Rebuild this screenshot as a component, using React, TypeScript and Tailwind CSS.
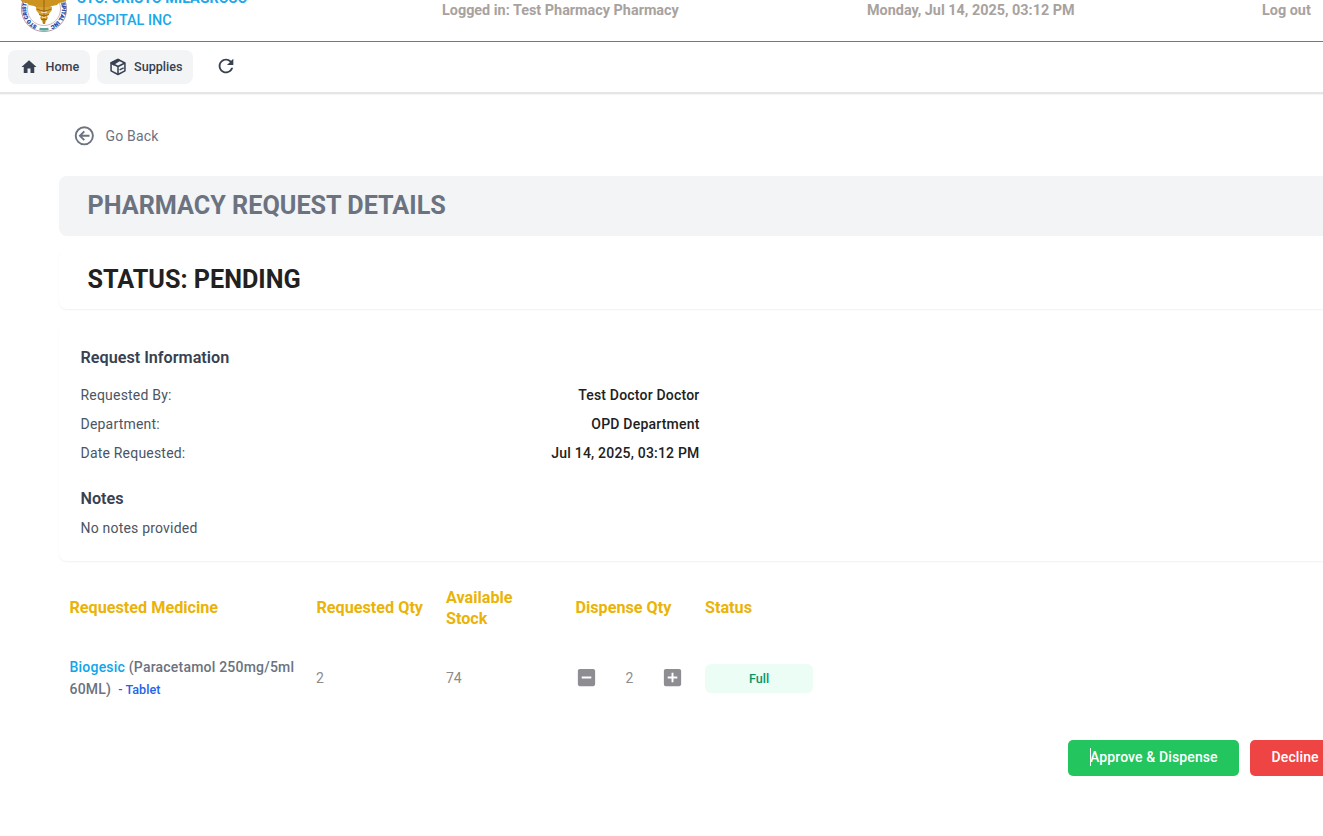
import React from "react";
import { MdHome, MdRefresh, MdIndeterminateCheckBox, MdAddBox } from "react-icons/md";

function Logo() {
  return (
    <svg viewBox="0 0 48 48" className="h-12 w-12 shrink-0">
      <defs>
        <path id="ringText" d="M24 42A18 18 0 0 1 24 6A18 18 0 0 1 24 42" />
      </defs>
      <circle cx="24" cy="24" r="22.600" fill="#fff" stroke="#a8828c" strokeWidth="0.8" />
      <circle cx="24" cy="24" r="16.500" fill="#fff" stroke="#c09aa0" strokeWidth="0.7" />
      <text fontSize="5.400" fontWeight="900" fill="#2346a8" stroke="#2346a8" strokeWidth="0.2" fontFamily="Roboto, sans-serif">
        <textPath href="#ringText" startOffset="7" textLength="99">STO CRISTO MILAGROSO HOSPITAL INC</textPath>
      </text>
      <path d="M19.500 44q4.500 0.800 9 0" stroke="#5aa39b" strokeWidth="2.600" fill="none" />
      <path d="M0 14q12-3 23 1h2q11-4 23-1l-4 3-5 1-2 2-5 1-2 1-6 1h-2l-6-1-2-1-5-1-2-2-5-1z" fill="#cc9320" />
      <path d="M16 22h16v3l-3 4-2 2 1 2-2 3-1 3h-2l-1-3-2-3 1-2-2-2-3-4z" fill="#d6a035" />
      <path d="M24 15v24M17 24q7 4 14 0M19 29.500q5 3 10 0M21 34q3 2 6 0" fill="none" stroke="#96640f" strokeWidth="1" />
      <path d="M21 27q3 1.500 6 0M22 32q2 1 4 0" fill="none" stroke="#fff3d8" strokeWidth="0.9" />
    </svg>
  );
}

function BoxIcon() {
  return (
    <svg viewBox="0 0 20 20" className="h-[18px] w-[18px]" fill="none" stroke="#374151" strokeWidth="1.7" strokeLinejoin="round">
      <path d="M10 1.700l7.700 3.800v8.800L10 18.300l-7.700-4V5.500z" />
      <path d="M2.300 5.500L10 9.500l7.700-4M10 9.500v8.800" />
      <path d="M2.300 5.500L10 1.700l1.800 0.900L5.600 6.500v1z" fill="#374151" />
      <path d="M11.800 13.300l4.500-2.300" strokeWidth="1.500" />
    </svg>
  );
}

function BackIcon() {
  return (
    <svg viewBox="0 0 20 20" className="h-5 w-5" fill="none" stroke="#6b7280" strokeWidth="1.9">
      <circle cx="10.300" cy="9.800" r="8.600" />
      <path d="M15.500 9.800H6.100M10.300 5.400L5.900 9.800l4.400 4.400" />
    </svg>
  );
}

const info = [
  ["Requested By:", "Test Doctor Doctor"],
  ["Department:", "OPD Department"],
  ["Date Requested:", "Jul 14, 2025, 03:12 PM"],
];

export default function App() {
  return (
    <div className="h-[836px] w-[1323px] overflow-hidden bg-white font-[Roboto,sans-serif] text-sm text-[#212121]">
      <header className="flex h-[42px] items-end overflow-hidden border-b border-[#1b96d3] text-[14.4px] font-bold text-[#a8a29e]">
        <div className="mb-2 ml-[19.5px]"><Logo /></div>
        <div className="mb-[9px] ml-[9.5px] w-[365px] shrink-0 leading-[22px] text-[#1da8ea]">
          <p>STO. CRISTO MILAGROSO</p>
          <p className="font-medium">HOSPITAL INC</p>
        </div>
        <span className="mb-5 w-[425px] shrink-0 leading-5">Logged in: Test Pharmacy Pharmacy</span>
        <span className="mb-5 w-[395px] shrink-0 leading-5">Monday, Jul 14, 2025, 03:12 PM</span>
        <span className="mb-5 shrink-0 leading-5">Log out</span>
      </header>
      <nav className="flex h-[52px] items-center border-b-2 border-[#e5e5e5] pl-2 text-[12.6px] font-medium text-[#374151] shadow-[0_1px_1px_rgba(0,0,0,0.04)]">
        <button className="flex h-[34px] w-[82px] items-center rounded-lg bg-[#f3f4f6] pl-3">
          <MdHome size={18} /><span className="ml-[7.5px]">Home</span>
        </button>
        <button className="ml-[7px] flex h-[34px] w-24 items-center rounded-lg bg-[#f3f4f6] pl-[11.5px]">
          <BoxIcon /><span className="ml-[7.5px]">Supplies</span>
        </button>
        <button className="mb-[2px] ml-[22px]"><MdRefresh size={22} /></button>
      </nav>
      <main className="ml-[59px]">
        <button className="ml-[15px] mt-8 flex h-5 items-center text-[#6b7280]">
          <BackIcon /><span className="ml-[11.5px] tracking-[0.2px]">Go Back</span>
        </button>
        <h1 className="mt-[30px] flex h-[60px] items-center rounded-l-lg bg-[#f3f4f6] pl-[28.5px] text-[25.2px] font-bold text-[#6b7280]">PHARMACY REQUEST DETAILS</h1>
        <h2 className="mt-[13px] flex h-[60px] items-center rounded-l-lg pl-[28.5px] pt-0.5 text-[25.2px] font-bold shadow-[0_1px_2px_rgba(0,0,0,0.06)]">STATUS: PENDING</h2>
        <section className="mt-[14px] h-[238px] rounded-l-lg pl-[21.5px] pt-[23px] tracking-[0.2px] shadow-[0_1px_2px_rgba(0,0,0,0.06)]">
          <h3 className="text-[16.2px] font-semibold leading-6 tracking-normal text-[#374151]">Request Information</h3>
          <dl className="mt-[15px] flex w-[619px] flex-col gap-[9px]">
            {info.map(([label, value]) => (
              <div key={label} className="flex justify-between leading-5">
                <dt className="text-[#4b5563]">{label}</dt>
                <dd className="font-medium">{value}</dd>
              </div>
            ))}
          </dl>
          <h3 className="mt-6 text-[16.2px] font-semibold leading-6 tracking-normal text-[#374151]">Notes</h3>
          <p className="mt-[7px] leading-5 text-[#4b5563]">No notes provided</p>
        </section>
        <div className="mt-[26px] grid grid-cols-[247px_129.5px_129.5px_129.5px_109px] items-center pl-[10.5px] text-[16.2px] font-bold leading-[21px] text-[#eab308]">
          <span className="-mt-px">Requested Medicine</span><span className="-mt-px">Requested Qty</span><span className="w-20">Available Stock</span><span className="-mt-px">Dispense Qty</span><span className="-mt-px">Status</span>
        </div>
        <div className="mt-[27px] grid grid-cols-[246.5px_130px_129.5px_129.5px_108px] items-center pl-[10.5px] text-[#8b8b8b]">
          <p className="w-[235px] font-medium leading-[22px] tracking-[0.21px] text-[#6b7280]">
            <span className="text-[#0ea5e9]">Biogesic</span> (Paracetamol 250mg/5ml 60ML) <span className="ml-[3.5px] text-[12.6px] tracking-normal text-[#2563eb]">- Tablet</span>
          </p>
          <span className="-mt-px">2</span><span className="-mt-px">74</span>
          <div className="-ml-px -mt-0.5 flex items-center text-[#8e8d92]">
            <MdIndeterminateCheckBox size={23} /><span className="mx-[28px] pt-px">2</span><MdAddBox size={23} />
          </div>
          <span className="flex h-[29px] items-center justify-center rounded-md bg-[#ecfdf5] pt-px text-[12.6px] font-medium text-[#059669]">Full</span>
        </div>
        <div className="mt-[39px] flex h-9 pl-[1009px] font-medium tracking-[0.12px] text-white">
          <button className="flex w-[171px] shrink-0 items-center rounded-[5px] bg-[#22c55e] pb-0.5 pl-[22px]"><span className="h-[18px] w-px bg-white" /><span className="-ml-px">Approve &amp; Dispense</span></button>
          <button className="ml-[11px] w-[95px] shrink-0 rounded-[5px] bg-[#ef4444] pb-0.5 pl-[21.5px] text-left">Decline</button>
        </div>
      </main>
    </div>
  );
}
